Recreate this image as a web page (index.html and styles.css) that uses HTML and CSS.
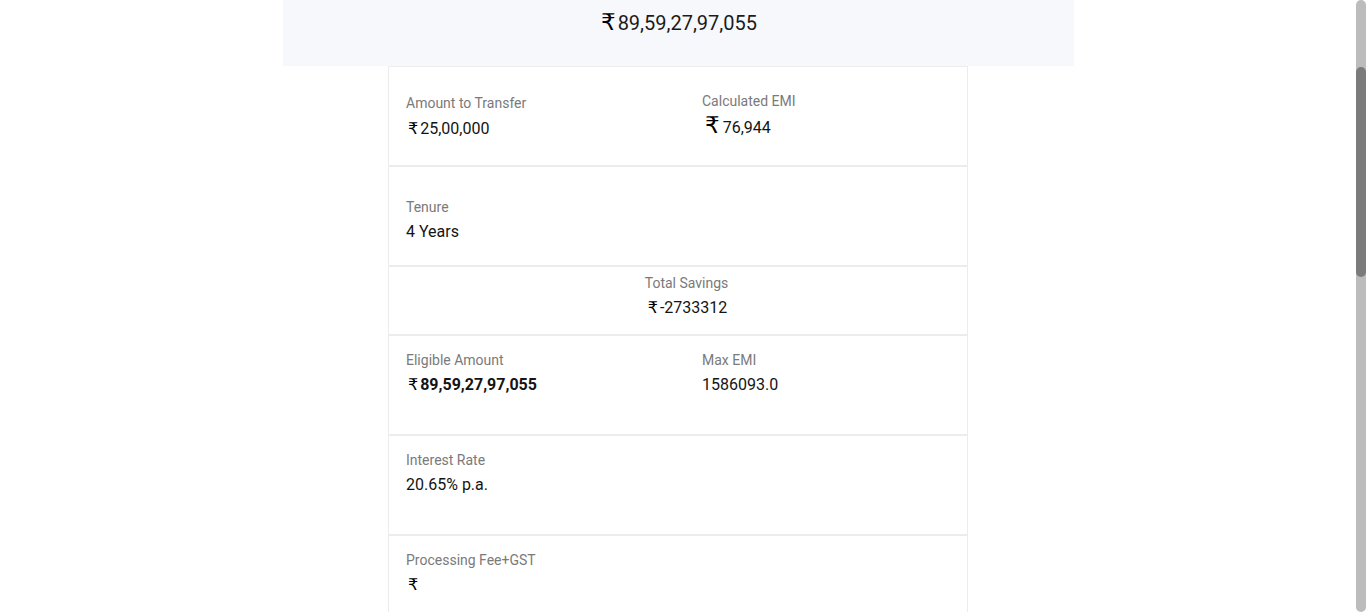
FILE: index.html
```html
<!DOCTYPE html>
<html lang="en">
<head>
<meta charset="utf-8">
<title>Balance Transfer</title>
<link rel="stylesheet" href="styles.css">
</head>
<body>
<div class="page">
  <main class="main">
    <header class="banner">
      <div class="banner-value"><span class="rs">₹</span>89,59,27,97,055</div>
    </header>
    <section class="card">
      <div class="row row-first two">
        <div class="col">
          <div class="label">Amount to Transfer</div>
          <div class="value"><span class="rs">₹</span>25,00,000</div>
        </div>
        <div class="col col-up">
          <div class="label">Calculated EMI</div>
          <div class="value"><span class="rs rs-big">₹</span>76,944</div>
        </div>
      </div>
      <div class="row row-tenure">
        <div class="col">
          <div class="label">Tenure</div>
          <div class="value">4 Years</div>
        </div>
      </div>
      <div class="row row-savings">
        <div class="label">Total Savings</div>
        <div class="value"><span class="rs">₹</span>-2733312</div>
      </div>
      <div class="row row-std two">
        <div class="col">
          <div class="label">Eligible Amount</div>
          <div class="value bold"><span class="rs">₹</span>89,59,27,97,055</div>
        </div>
        <div class="col">
          <div class="label">Max EMI</div>
          <div class="value">1586093.0</div>
        </div>
      </div>
      <div class="row row-std">
        <div class="col">
          <div class="label">Interest Rate</div>
          <div class="value">20.65% p.a.</div>
        </div>
      </div>
      <div class="row row-std">
        <div class="col">
          <div class="label">Processing Fee+GST</div>
          <div class="value"><span class="rs">₹</span></div>
        </div>
      </div>
    </section>
  </main>
  <aside class="scrollbar"><div class="thumb"></div></aside>
</div>
</body>
</html>
```

FILE: styles.css
```css
* { box-sizing: border-box; }
html, body {
  margin: 0;
  height: 100%;
  overflow: hidden;
  background: #ffffff;
  font-family: Roboto, "Liberation Sans", Arial, sans-serif;
}
.page {
  display: flex;
  height: 612px;
}
.main {
  flex: 1;
  min-width: 0;
}
.scrollbar {
  width: 10px;
  height: 612px;
  background: #bcbcbc;
  border-radius: 5px;
  padding-top: 67px;
}
.thumb {
  height: 210px;
  background: #7b7b7b;
  border-radius: 5px;
}
.banner {
  width: 791px;
  height: 66px;
  margin: 0 auto;
  background: #f7f8fc;
  padding-top: 10px;
  text-align: center;
}
.banner-value {
  font-size: 20px;
  line-height: 24px;
  color: #1b1b1b;
}
.rs {
  font-family: "DejaVu Sans", sans-serif;
  font-weight: 400;
  margin-left: 2px;
  margin-right: 2px;
  color: #000000;
}
.banner-value .rs {
  font-size: 23px;
  margin-right: 2px;
}
.card {
  width: 580px;
  margin: 0 auto;
  border: 1px solid #ececec;
  border-bottom: none;
  height: 546px;
}
.row {
  border-bottom: 2px solid #ececec;
  padding-left: 17px;
}
.row.two {
  display: grid;
  grid-template-columns: 296px 1fr;
}
.row-first { height: 100px; padding-top: 27px; }
.row-first .value { margin-top: 7px; }
.row-first .col-up .value { margin-top: 5px; }
.row-tenure { height: 100px; padding-top: 31px; }
.row-savings { height: 69px; padding-top: 7px; text-align: center; }
.row-std { height: 100px; padding-top: 15px; }
.row-std:last-child { border-bottom: none; }
.col-up { margin-top: -2px; }
.label {
  font-size: 14px;
  line-height: 18px;
  color: #7a7a7a;
}
.value {
  margin-top: 6px;
  font-size: 16px;
  line-height: 20px;
  color: #141414;
}
.value.bold { font-weight: 700; }
.rs-big {
  font-size: 23px;
  line-height: 20px;
  margin-left: 3px;
  margin-right: 3px;
}
```
